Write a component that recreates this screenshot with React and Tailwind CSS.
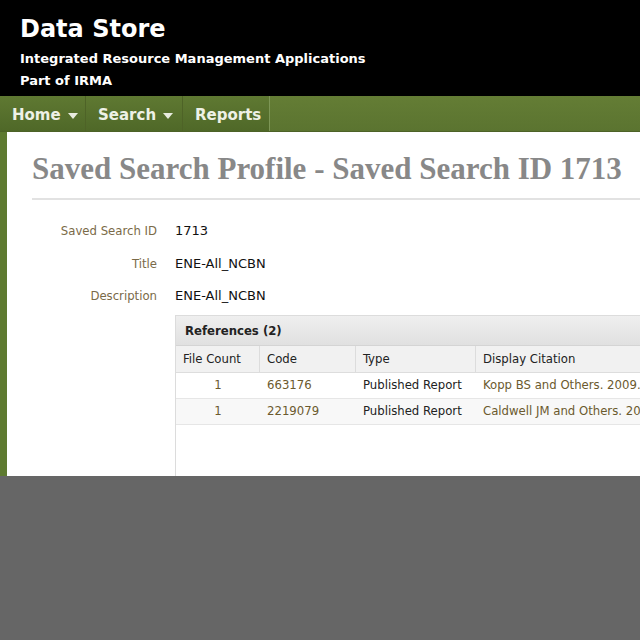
import React from "react";

const font = { fontFamily: '"DejaVu Sans Condensed", "DejaVu Sans", Tahoma, sans-serif' };
const wide = { fontFamily: '"DejaVu Sans", Tahoma, sans-serif' };

function Caret() {
  return (
    <svg width="10" height="6" viewBox="0 0 10 6" className="ml-[7px] mt-[2px]">
      <path d="M0 0 L10 0 L5 6 Z" fill="#e8ecdf" />
    </svg>
  );
}

export default function App() {
  const rows = [
    { count: "1", code: "663176", type: "Published Report", cite: "Kopp BS and Others. 2009. Ecological Monitoring Report" },
    { count: "1", code: "2219079", type: "Published Report", cite: "Caldwell JM and Others. 2013. Ecological Monitoring Report" },
  ];
  return (
    <div className="w-[640px] h-[640px] overflow-hidden bg-[#666666] flex flex-col" style={font}>
      <div className="bg-black h-[96px] shrink-0 pl-[20px] pt-[13px] text-white" style={wide}>
        <div className="text-[24px] font-bold leading-[32px]">Data Store</div>
        <div className="text-[13px] font-bold leading-[22px] mt-[3px]">Integrated Resource Management Applications</div>
        <div className="text-[13px] font-bold leading-[22px]">Part of IRMA</div>
      </div>
      <div className="h-[36px] shrink-0 flex bg-gradient-to-b from-[#647d35] to-[#5b7430] border-b border-[#4f6428] text-[#eef1e6] text-[15px] font-bold" style={wide}>
        <div className="w-[86px] flex items-center pl-[12px] pt-[3px] border-r border-[#4e6327] bg-gradient-to-b from-[#5f7932] to-[#4f6828]">Home<Caret /></div>
        <div className="w-[97px] flex items-center pl-[12px] pt-[3px] border-r border-[#4e6327] bg-gradient-to-b from-[#5f7932] to-[#4f6828]">Search<Caret /></div>
        <div className="w-[87px] flex items-center pl-[12px] pt-[3px] border-r border-[#7d9656] bg-gradient-to-b from-[#5f7932] to-[#4f6828]">Reports</div>
        <div className="flex-1" />
      </div>
      <div className="h-[344px] shrink-0 flex bg-[#5e7a30] shadow-[0_2px_3px_rgba(0,0,0,0.4)]">
        <div className="w-[7px] shrink-0" />
        <div className="flex-1 bg-white flex flex-col overflow-hidden">
          <div className="ml-[25px] pt-[19px] pb-[11px] border-b-2 border-[#e2e2e2] text-[31px] font-bold text-[#888888] leading-[36px] whitespace-nowrap" style={{ fontFamily: '"Liberation Serif", serif' }}>
            Saved Search Profile - Saved Search ID 1713
          </div>
          <div className="flex flex-col mt-[15px] text-[13px] leading-[24px]">
            {[["Saved Search ID", "1713"], ["Title", "ENE-All_NCBN"], ["Description", "ENE-All_NCBN"]].map(([k, v]) => (
              <div key={k} className="flex h-[32.5px] items-center">
                <div className="w-[150px] text-right text-[#7a6a48]">{k}</div>
                <div className="ml-[18px] text-[#111]" style={wide}>{v}</div>
              </div>
            ))}
          </div>
          <div className="ml-[168px] mt-[2px] flex-1 border-l border-t border-[#dcdcdc] flex flex-col text-[13px]">
            <div className="h-[30px] flex items-center pl-[9px] pt-[1px] font-bold text-[#222] bg-gradient-to-b from-[#efefef] to-[#e0e0e0] border-b border-[#d4d4d4]">References (2)</div>
            <div className="flex h-[27px] bg-[#f1f1f1] border-b border-[#dddddd] text-[#222] whitespace-nowrap">
              <div className="w-[84px] flex items-center pl-[7px] border-r border-[#dcdcdc]">File Count</div>
              <div className="w-[96px] flex items-center pl-[7px] border-r border-[#dcdcdc]">Code</div>
              <div className="w-[120px] flex items-center pl-[7px] border-r border-[#dcdcdc]">Type</div>
              <div className="flex-1 flex items-center pl-[7px]">Display Citation</div>
            </div>
            {rows.map((r, i) => (
              <div key={i} className={`flex h-[26px] whitespace-nowrap border-b border-[#e6e6e6] ${i === 1 ? "bg-[#f8f8f8]" : "bg-white"}`}>
                <div className="w-[84px] flex items-center justify-center text-[#6b5a2e]">{r.count}</div>
                <div className="w-[96px] flex items-center pl-[7px] text-[#6b5a2e]">{r.code}</div>
                <div className="w-[120px] flex items-center pl-[7px] text-[#222]">{r.type}</div>
                <div className="flex-1 flex items-center pl-[7px] text-[#6b5a2e] overflow-hidden">{r.cite}</div>
              </div>
            ))}
          </div>
        </div>
      </div>
      <div className="flex-1 bg-[#666666]" />
    </div>
  );
}
